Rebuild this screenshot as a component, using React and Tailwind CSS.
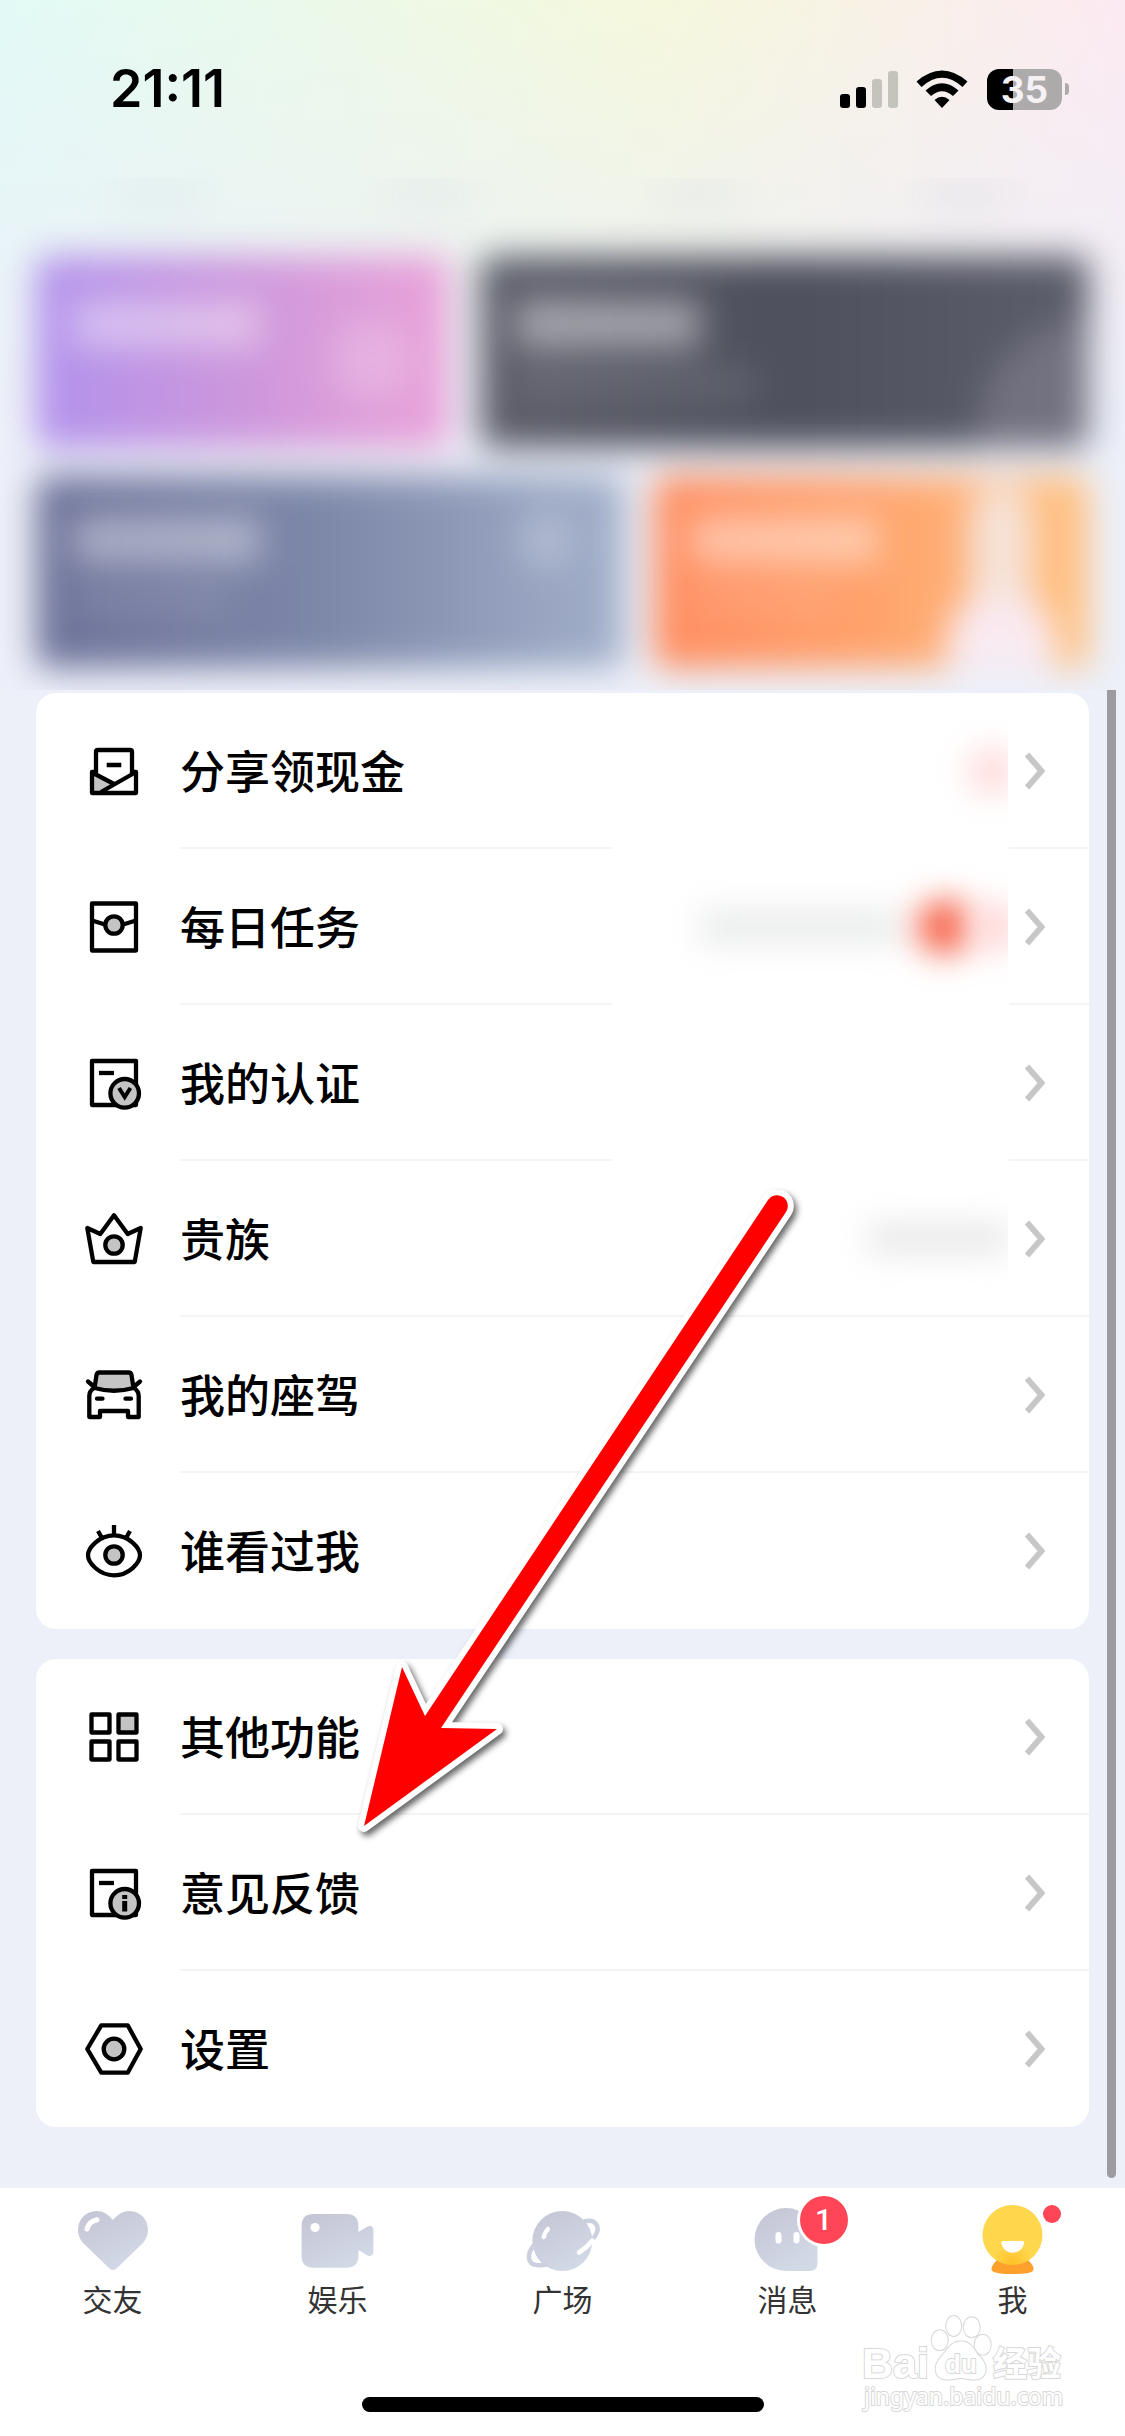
import React from 'react';

const MenuIcon = ({ children }) => (
  <svg
    viewBox="0 0 60 60"
    className="size-15 shrink-0"
    fill="none"
    stroke="#000"
    strokeWidth="4.3"
    strokeLinejoin="round"
    aria-hidden="true"
  >
    {children}
  </svg>
);

const ShareIcon = () => (
  <MenuIcon>
    <path d="M8 31 31 43.5 17 52H8Z" fill="#c4c4c4" stroke="none" />
    <path d="M12 32V11q0-2 2-2H46q2 0 2 2V32" />
    <path d="M12 31H8V52H52V31H48" />
    <path d="M9 32 31 43.5M52 31 17 51M22.7 24H37.3" />
  </MenuIcon>
);

const TaskIcon = () => (
  <MenuIcon>
    <rect x="8" y="6.5" width="44" height="47" />
    <path d="M8 23.5 21 27.5M52 23.5 39 27.5" />
    <circle cx="30" cy="28" r="8.7" fill="#c4c4c4" />
  </MenuIcon>
);

const VerifyIcon = () => (
  <MenuIcon>
    <rect x="8" y="8" width="44" height="44" />
    <path d="M15 20H30" />
    <circle cx="40.7" cy="40.3" r="14.3" fill="#c4c4c4" />
    <path d="M35 35 40.7 44 46.4 35" strokeWidth="4" strokeLinejoin="miter" />
  </MenuIcon>
);

const CrownIcon = () => (
  <MenuIcon>
    <path d="M3.3 19 16.3 25 30 6.3 43.7 25 56.7 19 50.7 53H9.3Z" />
    <circle cx="30" cy="36" r="8.7" fill="#c4c4c4" />
  </MenuIcon>
);

const CarIcon = () => (
  <MenuIcon>
    <path d="M10.5 23 12.5 10Q13 7.5 15.5 7.5H44.5Q47 7.5 47.5 10L49.5 23Q30 28.5 10.5 23Z" fill="#c4c4c4" />
    <path d="M10 23C7 25 5.3 27 5.3 31V52H16V46H44V52H54.7V31C54.7 27 53 25 50 23" />
    <path d="M4 16.5 11 22.5M56 16.5 49 22.5M13 33.7H18.5M41.5 33.7H47" strokeLinecap="round" />
  </MenuIcon>
);

const EyeIcon = () => (
  <MenuIcon>
    <path d="M4 34.3C4 27 15 14.3 30 14.3S56 27 56 34.3 45 54.3 30 54.3 4 41.5 4 34.3Z" />
    <path d="M30 4V14M14 10 18 17M46 10 42 17" />
    <circle cx="30" cy="34" r="8.7" fill="#c4c4c4" />
  </MenuIcon>
);

const GridIcon = () => (
  <MenuIcon>
    <rect x="7.5" y="7.5" width="18" height="18" />
    <rect x="34.5" y="7.5" width="18" height="18" fill="#c4c4c4" />
    <rect x="7.5" y="34.5" width="18" height="18" />
    <rect x="34.5" y="34.5" width="18" height="18" />
  </MenuIcon>
);

const FeedbackIcon = () => (
  <MenuIcon>
    <rect x="8" y="8" width="44" height="44" />
    <path d="M15 20H30" />
    <circle cx="40.7" cy="40.3" r="14.3" fill="#c4c4c4" />
    <path d="M40.7 32V36M40.7 38V48.5" strokeWidth="5" />
  </MenuIcon>
);

const SettingsIcon = () => (
  <MenuIcon>
    <path d="M17.3 6.3H43.7L56.7 30 43.7 53.7H17.3L3.3 30Z" />
    <circle cx="30" cy="30" r="10.3" fill="#c4c4c4" />
  </MenuIcon>
);

const Chevron = () => (
  <svg viewBox="0 0 20 38" className="h-[38px] w-5 shrink-0" aria-hidden="true">
    <path d="M2 2.5 16.5 19 2 35.5" fill="none" stroke="#c7c7c7" strokeWidth="6" />
  </svg>
);

const mainItems = [
  {
    label: '分享领现金',
    Icon: ShareIcon,
    cut: true,
    hint: <span className="-mr-2 size-12 rounded-full bg-[#ffdada] blur-lg" />,
  },
  {
    label: '每日任务',
    Icon: TaskIcon,
    cut: true,
    hint: (
      <>
        <span className="h-9 w-[200px] bg-[#ebecec] blur-lg" />
        <span className="ml-4 size-14 rounded-full bg-[#f6674e] blur-lg" />
        <span className="-mr-3 size-12 rounded-full bg-[#ffd6d6] blur-lg" />
      </>
    ),
  },
  { label: '我的认证', Icon: VerifyIcon, cut: true },
  {
    label: '贵族',
    Icon: CrownIcon,
    hint: <span className="h-8 w-[140px] bg-[#e9e9eb] blur-lg" />,
  },
  { label: '我的座驾', Icon: CarIcon },
  { label: '谁看过我', Icon: EyeIcon },
];

const otherItems = [
  { label: '其他功能', Icon: GridIcon },
  { label: '意见反馈', Icon: FeedbackIcon },
  { label: '设置', Icon: SettingsIcon },
];

const MenuList = ({ items }) => (
  <ul className="overflow-hidden rounded-[20px] bg-white">
    {items.map(({ label, Icon, hint, cut }, i) => (
      <li key={label}>
        <button type="button" className="flex h-[154px] w-full items-center pt-0.5 pr-11 pl-12 text-left">
          <Icon />
          <span className="ml-9 pt-1.5 text-[45px] leading-[60px] font-medium text-black">{label}</span>
          <span className="mr-[17px] flex h-full flex-1 items-center justify-end overflow-hidden">{hint}</span>
          <Chevron />
        </button>
        {/* 分割线 */}
        <div className="flex h-0.5 justify-between pl-36">
          {i < items.length - 1 && (
            <>
              <span className={cut ? 'w-[432px] bg-[#f4f4f4]' : 'flex-1 bg-[#f4f4f4]'} />
              {cut && <span className="w-20 bg-[#f4f4f4]" />}
            </>
          )}
        </div>
      </li>
    ))}
  </ul>
);

const StatusBar = () => (
  <div className="flex h-[178px] items-center justify-between pr-14 pl-[110px]">
    <time className="font-['Inter',sans-serif] text-[52px] leading-[60px] font-semibold text-black">21:11</time>
    <div className="flex items-center">
      <svg viewBox="0 0 58 38" className="h-[38px] w-[58px]" aria-hidden="true">
        <rect x="0" y="24" width="10" height="14" rx="3" />
        <rect x="16" y="17" width="10" height="21" rx="3" />
        <rect x="32" y="9" width="10" height="29" rx="3" fill="#c4c4bc" />
        <rect x="48" y="1" width="10" height="37" rx="3" fill="#c4c4bc" />
      </svg>
      <svg viewBox="0 0 52 38" className="ml-[18px] h-[38px] w-[52px]" aria-hidden="true">
        <path d="M0.5 11.5Q26-10.5 51.5 11.5L46.5 17Q26-1.5 5.5 17Z" />
        <path d="M9.5 20.5Q26 6 42.5 20.5L37 26Q26 16.5 15 26Z" />
        <path d="M18.5 30Q26 23.5 33.5 30L26 38Z" />
      </svg>
      <div className="ml-[19px] flex items-center gap-[3px]">
        <div className="flex h-[41px] w-[75px] items-center justify-center rounded-xl bg-linear-to-r from-black from-35% to-[#adaaab] to-35% font-['Inter',sans-serif] text-[37px] leading-[41px] font-bold text-[#f5f1f4]">
          35
        </div>
        <div className="h-3 w-1 rounded-r-full bg-[#adaaab]" />
      </div>
    </div>
  </div>
);

const PromoCards = () => (
  <div className="flex flex-col gap-7 blur-[17px]" aria-hidden="true">
    <div className="grid h-48 grid-cols-[414fr_609fr] gap-[30px]">
      <div className="relative overflow-hidden rounded-xl bg-linear-to-r from-[#b192ec] via-[#cd97dc] to-[#eaa3d8] px-9 pt-11">
        <div className="h-12 w-[188px] bg-white/40" />
        <div className="absolute right-10 bottom-12 size-20 rounded-full bg-white/20" />
      </div>
      <div className="relative overflow-hidden rounded-xl bg-linear-to-r from-[#5c5d69] via-[#4e505d] to-[#5c5e6b] px-9 pt-11">
        <div className="h-12 w-[184px] bg-white/45" />
        <div className="mt-5 h-8 w-60 bg-white/10" />
        <div className="absolute right-0 bottom-0 h-32 w-28 rounded-tl-full bg-[#8b8798]/50" />
      </div>
    </div>
    <div className="grid h-48 grid-cols-[588fr_435fr] gap-[30px]">
      <div className="relative overflow-hidden rounded-xl bg-linear-to-r from-[#6c7198] via-[#7e88a9] to-[#a3b0ca] px-9 pt-10">
        <div className="h-12 w-[188px] bg-white/40" />
        <div className="mt-5 h-8 w-40 bg-white/10" />
        <div className="absolute top-9 right-14 h-14 w-12 rounded-full bg-white/25" />
      </div>
      <div className="relative overflow-hidden rounded-xl bg-linear-to-r from-[#ff8c5f] via-[#ffa26c] to-[#ffc384] px-9 pt-10">
        <div className="h-12 w-[188px] bg-white/45" />
        <div className="mt-5 h-8 w-36 bg-white/10" />
        <div className="absolute top-2 right-14 h-40 w-16 rounded-full bg-[#f6e3d8]" />
        <div className="absolute right-8 -bottom-6 h-24 w-28 rounded-full bg-[#f9eaf1]" />
      </div>
    </div>
  </div>
);

const TabIcon = ({ children }) => (
  <svg viewBox="0 0 90 84" className="h-[84px] w-[90px]" aria-hidden="true">
    {children}
  </svg>
);

const tabs = [
  {
    label: '交友',
    icon: (
      <TabIcon>
        <path
          fill="url(#tabFill)"
          d="M45 26C40 20 34.5 17 28.5 17 18 17 10 25.5 10 36 10 41 12 45.5 15 49L41 74Q45 78 49 74L75 49C78 45.5 80 41 80 36 80 25.5 72 17 61.5 17 55.5 17 50 20 45 26Z"
        />
        <path d="M19 35Q21 27.5 29 25.8" fill="none" stroke="#fff" strokeWidth="5" strokeLinecap="round" />
      </TabIcon>
    ),
  },
  {
    label: '娱乐',
    icon: (
      <TabIcon>
        <path
          fill="url(#tabFill)"
          d="M20.5 20H53.5Q65.4 20 65.4 32V38L73.5 33Q80.4 30 80.4 37V57Q80.4 64 73.5 61L65.4 56V62Q65.4 73.7 53.5 73.7H20.5Q8.6 73.7 8.6 62V32Q8.6 20 20.5 20Z"
        />
        <circle cx="22" cy="33.5" r="4.6" fill="#fff" />
      </TabIcon>
    ),
  },
  {
    label: '广场',
    icon: (
      <TabIcon>
        <circle cx="44.3" cy="47" r="30" fill="url(#tabFill)" />
        <path d="M17 50C8 60 9 71 20 71.2Q24 71.5 30 70M66 27.5C78 24.5 83 33 77 42L72 49" fill="none" stroke="#ccd0de" strokeWidth="4.5" />
        <path d="M16 55.5C17 61 19.5 66 23 68.8 16 69.5 12.5 64.5 16 55.5Z" fill="#fff" />
        <path d="M70 30.5C75 30.5 77.5 35 74.5 42 74 38 72.5 34 70 30.5Z" fill="#fff" />
        <path d="M25.7 43Q27 38 30 35M61 58.5Q69 53.5 74.5 46.5" fill="none" stroke="#fff" strokeWidth="4.5" strokeLinecap="round" />
      </TabIcon>
    ),
  },
  {
    label: '消息',
    icon: (
      <TabIcon>
        <path fill="url(#tabFill)" d="M43 14A31.5 31.5 0 0 0 43 77H66.5Q74.5 77 74.5 69V45.5A31.5 31.5 0 0 0 43 14Z" />
        <path d="M35.5 41V46.5M53.5 41V46.5" stroke="#fff" strokeWidth="6" strokeLinecap="round" />
      </TabIcon>
    ),
    badge: (
      <span className="absolute top-0.5 left-[57px] flex size-12 items-center justify-center rounded-full bg-[#ff4556] font-['Roboto',sans-serif] text-[30px] leading-[48px] font-medium text-white ring-[3px] ring-white">
        1
      </span>
    ),
  },
  {
    label: '我',
    icon: (
      <TabIcon>
        <path d="M29 66H60C63 69 65.6 72 65.6 75 65.6 78.5 60 80 44.5 80S23.5 78.5 23.5 75C23.5 72 26 69 29 66Z" fill="#ff9f2c" />
        <circle cx="44.5" cy="41" r="30" fill="url(#faceFill)" />
        <path d="M35.5 47H54Q57 47 56 50C54 56 50 58.7 44.7 58.7S35.5 56 33.5 50Q32.5 47 35.5 47Z" fill="#fff" />
      </TabIcon>
    ),
    badge: <span className="absolute top-[11px] left-[75px] size-[18px] rounded-full bg-[#ff4556]" />,
  },
];

const TabBar = () => (
  <nav className="bg-white">
    <svg className="absolute size-0" aria-hidden="true">
      <defs>
        <linearGradient id="tabFill" x1="0" y1="0" x2="0.6" y2="1">
          <stop offset="0" stopColor="#c4c4d4" />
          <stop offset="1" stopColor="#d2d9e6" />
        </linearGradient>
        <radialGradient id="faceFill" cx="0.5" cy="1" r="0.5">
          <stop offset="0" stopColor="#ffbf24" />
          <stop offset="0.7" stopColor="#ffd74d" />
        </radialGradient>
      </defs>
    </svg>
    <div className="grid grid-cols-5 pt-1.5">
      {tabs.map(({ label, icon, badge }) => (
        <a key={label} href="#" className="flex flex-col items-center text-[#333]">
          <span className="relative">
            {icon}
            {badge}
          </span>
          <span className="text-[30px] leading-[46px]">{label}</span>
        </a>
      ))}
    </div>
    <div className="flex justify-center pt-[73px] pb-6">
      <div className="h-[15px] w-[402px] rounded-full bg-black" />
    </div>
  </nav>
);

const Watermark = () => (
  <svg
    viewBox="0 0 210 105"
    className="pointer-events-none absolute right-[57px] bottom-[21px] h-[105px] w-[210px] overflow-visible font-['Liberation_Sans','Noto_Sans_CJK_SC',sans-serif]"
    fill="#fff"
    stroke="#d8d8d8"
    strokeWidth="2"
    paintOrder="stroke"
  >
    <text x="4" y="68" fontSize="43" fontWeight="700">Bai</text>
    <ellipse cx="81.7" cy="30.3" rx="8" ry="10" />
    <ellipse cx="95.7" cy="16" rx="7.5" ry="10" />
    <ellipse cx="113.7" cy="17.3" rx="8" ry="10" />
    <ellipse cx="124.7" cy="34.7" rx="8" ry="10" />
    <path d="M103 31.5C114 31.5 116 41 122 47 132 57 128 69.5 117 69.5 110 69.5 108 68 103 68S96 69.5 89 69.5C77 69.5 74 57 83 47 89 41 92 31.5 103 31.5Z" />
    <text x="87" y="63" fontSize="26" fontWeight="700">du</text>
    <text x="135" y="66" fontSize="34" fontWeight="700">经验</text>
    <text x="6" y="95" fontSize="23" className="font-['Noto_Sans',sans-serif]">jingyan.baidu.com</text>
  </svg>
);

// 指向「意见反馈」的箭头
const Arrow = () => (
  <svg
    viewBox="0 0 460 660"
    className="pointer-events-none absolute top-[1190px] left-[350px] h-[660px] w-[460px] drop-shadow-[3px_4px_3px_rgba(0,0,0,0.6)]"
    aria-hidden="true"
  >
    <path
      d="M14 636 52 477 75 526 418 10A10.5 10.5 0 0 1 436 22L91 538 147 539Z"
      fill="#f00"
      stroke="#fff"
      strokeWidth="12"
      strokeLinejoin="round"
      paintOrder="stroke"
    />
  </svg>
);

const App = () => (
  <div className="relative flex min-h-screen flex-col overflow-hidden bg-[#edf0f9] font-['Liberation_Sans','Noto_Sans_CJK_SC',sans-serif]">
    <header className="overflow-hidden bg-linear-to-r from-[#e2faf6] via-[#f5f8dc] via-58% to-[#fceaf2]">
      <div className="bg-linear-to-b from-[#edf0f9]/0 to-[#edf0f9] to-60% pb-[22px]">
        <StatusBar />
        <div className="flex h-[78px] items-start justify-around overflow-hidden px-6" aria-hidden="true">
          <span className="h-8 w-20 bg-[#dfe6ea]/40 blur-lg" />
          <span className="h-8 w-20 bg-[#dfe6ea]/40 blur-lg" />
          <span className="h-8 w-20 bg-[#dfe3e6]/40 blur-lg" />
          <span className="h-8 w-20 bg-[#dfdfe6]/40 blur-lg" />
        </div>
        <div className="px-9">
          <PromoCards />
        </div>
      </div>
    </header>

    <main className="flex flex-1 flex-col gap-[30px] px-9 pt-[3px] pb-[61px]">
      <MenuList items={mainItems} />
      <MenuList items={otherItems} />
    </main>

    <TabBar />

    <div className="absolute top-[690px] right-[9px] bottom-[258px] w-[9px] rounded-b-full bg-[#9b9ba0]" />
    <Arrow />
    <Watermark />
  </div>
);

export default App;
